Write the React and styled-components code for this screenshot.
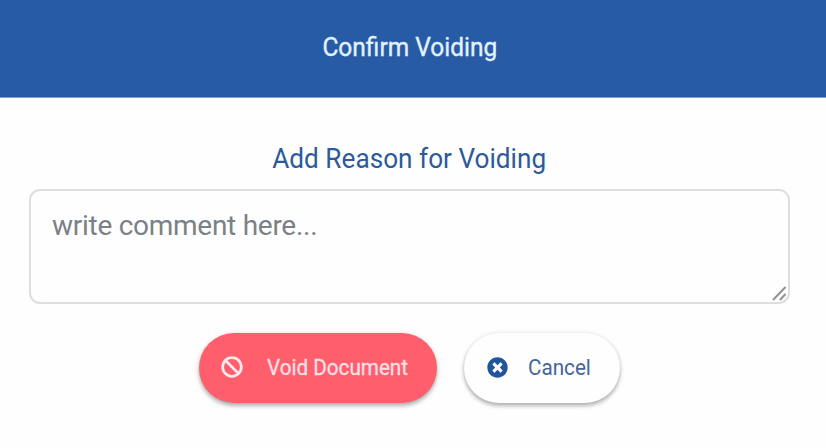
import React from "react";
import styled, { createGlobalStyle } from "styled-components";
import { FaBan, FaTimesCircle } from "react-icons/fa";

const GlobalStyle = createGlobalStyle`
  * { box-sizing: border-box; }
  body { margin: 0; background: #fefefe; font-family: Roboto, sans-serif; }
`;

const Dialog = styled.main`
  display: flex;
  flex-direction: column;
  height: 448px;
  background: #fefefe;
`;

const Header = styled.header`
  display: flex;
  justify-content: center;
  height: 98px;
  padding: 32px 7px 0 0;
  background: #285ba5;
  border-bottom: 1px solid #7f9fca;
`;

const Title = styled.h1`
  margin: 0;
  color: #e2f1ff;
  font-size: 26px;
  font-weight: 400;
  line-height: 30px;
  white-space: nowrap;
  transform: scaleX(0.942);
  -webkit-text-stroke: 0.35px currentColor;
`;

const Body = styled.section`
  display: flex;
  flex-direction: column;
  padding: 45px 36px 0 29px;
`;

const Label = styled.label`
  align-self: center;
  color: #2c5a9b;
  font-size: 27px;
  line-height: 32px;
  white-space: nowrap;
  transform: scaleX(0.97);
`;

const Field = styled.div`
  position: relative;
  height: 115px;
  margin-top: 14px;
`;

const Comment = styled.textarea`
  display: block;
  width: 100%;
  height: 100%;
  padding: 18px 21px;
  border: 2px solid #dcdfe2;
  border-radius: 11px;
  outline: none;
  resize: none;
  background: #fefefe;
  color: #495057;
  font: 400 28px/34px Roboto, sans-serif;
  letter-spacing: -0.27px;
  &::placeholder { color: #7b8186; opacity: 1; }
`;

const Grip = styled.svg`
  position: absolute;
  right: 2px;
  bottom: 2px;
  pointer-events: none;
`;

const Actions = styled.div`
  display: flex;
  gap: 27px;
  margin: 29px 0 0 170px;
`;

const Button = styled.button`
  display: flex;
  align-items: center;
  width: ${(p) => (p.$danger ? 238 : 156)}px;
  height: 70px;
  padding: 0 0 2px ${(p) => (p.$danger ? 22 : 23)}px;
  gap: ${(p) => (p.$danger ? 24 : 20)}px;
  border: 0;
  border-radius: 35px;
  background: ${(p) => (p.$danger ? "#ff5f6d" : "#fefefe")};
  color: ${(p) => (p.$danger ? "#ffdfe3" : "#456698")};
  box-shadow: 0 3px 4px rgba(0, 0, 0, 0.28), 0 0 4px rgba(0, 0, 0, 0.1);
  font: 400 22.5px/28px Roboto, sans-serif;
  white-space: nowrap;
  -webkit-text-stroke: ${(p) => (p.$danger ? 0.35 : 0)}px currentColor;
  svg { flex: none; color: ${(p) => (p.$danger ? "#ffe9ec" : "#23559c")}; }
`;

const ButtonText = styled.span`
  transform: scaleX(0.918);
  transform-origin: left center;
`;

export default function App() {
  return (
    <>
      <GlobalStyle />
      <Dialog>
        <Header><Title>Confirm Voiding</Title></Header>
        <Body>
          <Label htmlFor="reason">Add Reason for Voiding</Label>
          <Field>
            <Comment id="reason" placeholder="write comment here..." />
            <Grip width="17" height="17" viewBox="0 0 17 17" fill="none" stroke="#929292" strokeWidth="2">
              <path d="M2 15 14.5 2M9 15l5.5-6" />
            </Grip>
          </Field>
          <Actions>
            <Button type="button" $danger><FaBan size={22} /><ButtonText>Void Document</ButtonText></Button>
            <Button type="button"><FaTimesCircle size={21} /><ButtonText>Cancel</ButtonText></Button>
          </Actions>
        </Body>
      </Dialog>
    </>
  );
}
